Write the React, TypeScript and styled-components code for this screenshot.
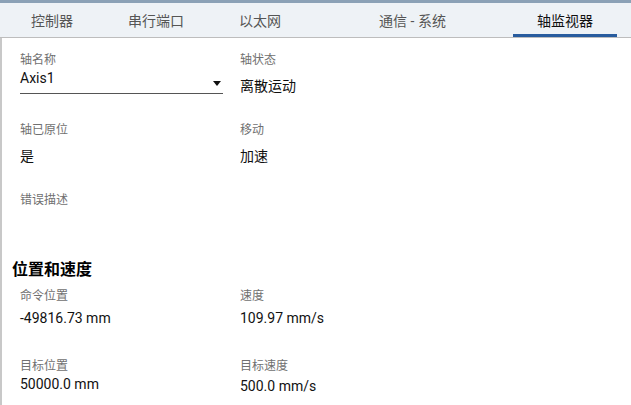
import React from "react";
import styled, { createGlobalStyle } from "styled-components";

const GlobalStyle = createGlobalStyle`
  html, body {
    margin: 0;
    padding: 0;
    background: #ffffff;
  }
  body {
    font-family: Roboto, "Noto Sans CJK SC", "Noto Sans", sans-serif;
    color: #111;
  }
`;

const Page = styled.div`
  width: 631px;
  height: 405px;
  display: flex;
  flex-direction: column;
  overflow: hidden;
  background: #fff;
`;

const TopStrip = styled.div`
  flex-shrink: 0;
  height: 3px;
  background: #8ba1b6;
`;

const TabBar = styled.div`
  flex-shrink: 0;
  display: flex;
  height: 34px;
  background: #eef2f6;
  border-bottom: 1px solid #bdbdbd;
`;

const Tab = styled.div<{ $w: number; $active?: boolean }>`
  width: ${({ $w }) => $w}px;
  display: flex;
  align-items: center;
  justify-content: center;
  font-size: 14px;
  padding-top: 3px;
  box-sizing: border-box;
  color: ${({ $active }) => ($active ? "#111" : "#555")};
  border-bottom: 3px solid ${({ $active }) => ($active ? "#285c9e" : "transparent")};
`;

const Body = styled.div`
  flex: 1 1 auto;
  min-height: 0;
  border-left: 2px solid #c8c8c8;
  padding: 14px 0 0 10px;
`;

const Grid = styled.div`
  display: grid;
  grid-template-columns: 203px 1fr;
  column-gap: 17px;
  margin-left: 8px;
`;

const Field = styled.div<{ $h?: number }>`
  height: ${({ $h }) => $h ?? 70}px;
  display: flex;
  flex-direction: column;
`;

const Label = styled.div`
  font-size: 12px;
  line-height: 16px;
  color: #707070;
`;

const Value = styled.div<{ $gap?: number }>`
  font-size: 14px;
  line-height: 20px;
  margin-top: ${({ $gap }) => $gap ?? 8}px;
  color: #111;
`;

const Select = styled.div`
  display: flex;
  align-items: flex-start;
  justify-content: space-between;
  height: 26px;
  border-bottom: 1px solid #555;
  font-size: 14px;
  line-height: 20px;
  box-sizing: border-box;
`;

const Arrow = styled.span`
  width: 0;
  height: 0;
  border-left: 4px solid transparent;
  border-right: 4px solid transparent;
  border-top: 5px solid #111;
  margin: 13px 2px 0 0;
`;

const Heading = styled.div`
  font-size: 16px;
  font-weight: bold;
  line-height: 22px;
  margin-top: -1px;
  margin-bottom: 7px;
  color: #000;
`;

const tabs = [
  { name: "控制器", w: 104 },
  { name: "串行端口", w: 104 },
  { name: "以太网", w: 104 },
  { name: "通信 - 系统", w: 201 },
  { name: "轴监视器", w: 104, active: true },
];

export default function App() {
  return (
    <Page>
      <GlobalStyle />
      <TopStrip />
      <TabBar>
        {tabs.map((t) => (
          <Tab key={t.name} $w={t.w} $active={t.active}>
            {t.name}
          </Tab>
        ))}
      </TabBar>
      <Body>
        <Grid>
          <Field>
            <Label>轴名称</Label>
            <Select>
              <span>Axis1</span>
              <Arrow />
            </Select>
          </Field>
          <Field>
            <Label>轴状态</Label>
            <Value>离散运动</Value>
          </Field>
          <Field>
            <Label>轴已原位</Label>
            <Value>是</Value>
          </Field>
          <Field>
            <Label>移动</Label>
            <Value>加速</Value>
          </Field>
          <Field $h={68}>
            <Label>错误描述</Label>
          </Field>
          <Field $h={68} />
        </Grid>
        <Heading>位置和速度</Heading>
        <Grid>
          <Field>
            <Label>命令位置</Label>
            <Value $gap={4}>-49816.73 mm</Value>
          </Field>
          <Field>
            <Label>速度</Label>
            <Value $gap={4}>109.97 mm/s</Value>
          </Field>
          <Field>
            <Label>目标位置</Label>
            <Value $gap={0}>50000.0 mm</Value>
          </Field>
          <Field>
            <Label>目标速度</Label>
            <Value $gap={2}>500.0 mm/s</Value>
          </Field>
        </Grid>
      </Body>
    </Page>
  );
}
